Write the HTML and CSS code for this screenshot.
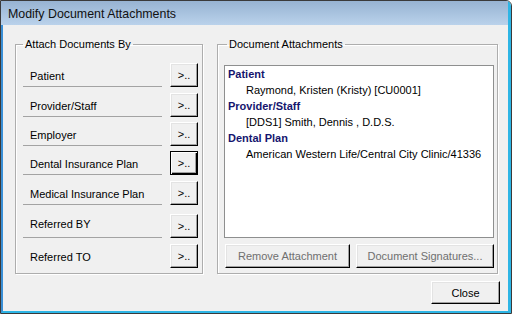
FILE: index.html
```html
<!DOCTYPE html>
<html>
    <head>
        <meta charset="utf-8">
        <title>Modify Document Attachments</title>
        <link rel="stylesheet" href="styles.css">
    </head>
    <body>
        <div class="window">
            <div class="titlebar">Modify Document Attachments</div>
            <div class="client">
                <div class="groups">
                    <fieldset class="group attach">
                        <legend>Attach Documents By</legend>
                        <div class="row"><span class="row-label">Patient</span><button class="btn pick">&gt;..</button></div>
                        <div class="row"><span class="row-label">Provider/Staff</span><button class="btn pick">&gt;..</button></div>
                        <div class="row"><span class="row-label">Employer</span><button class="btn pick">&gt;..</button></div>
                        <div class="row"><span class="row-label">Dental Insurance Plan</span><button class="btn pick focused">&gt;..</button></div>
                        <div class="row"><span class="row-label">Medical Insurance Plan</span><button class="btn pick">&gt;..</button></div>
                        <div class="row row-wide"><span class="row-label">Referred BY</span><button class="btn pick">&gt;..</button></div>
                        <div class="row"><span class="row-label">Referred TO</span><button class="btn pick">&gt;..</button></div>
                    </fieldset>
                    <fieldset class="group docs">
                        <legend>Document Attachments</legend>
                        <div class="listbox">
                            <div class="lb-head">Patient</div>
                            <div class="lb-item">Raymond, Kristen (Kristy) [CU0001]</div>
                            <div class="lb-head">Provider/Staff</div>
                            <div class="lb-item">[DDS1] Smith, Dennis , D.D.S.</div>
                            <div class="lb-head">Dental Plan</div>
                            <div class="lb-item">American Western Life/Central City Clinic/41336</div>
                        </div>
                        <div class="doc-actions">
                            <button class="btn remove" disabled>Remove Attachment</button>
                            <button class="btn signatures" disabled>Document Signatures...</button>
                        </div>
                    </fieldset>
                </div>
                <div class="footer">
                    <button class="btn close">Close</button>
                </div>
            </div>
        </div>
    </body>
</html>
```

FILE: styles.css
```css
html, body {
    margin: 0;
    padding: 0;
}
body {
    font-family: "Liberation Sans", Arial, sans-serif;
    font-size: 11px;
    color: #000;
    background: #fff;
}
.window {
    width: 512px;
    height: 314px;
    box-sizing: border-box;
    border: 1px solid #3a3a3a;
    border-top-right-radius: 6px;
    overflow: hidden;
}
.titlebar {
    height: 24px;
    box-sizing: border-box;
    padding: 2px 0 0 7px;
    line-height: 22px;
    font-size: 12.4px;
    color: #111;
    background: linear-gradient(#97b3d2, #bad2eb);
    border-right: 3px solid #2db5e5;
}
.client {
    height: 288px;
    box-sizing: border-box;
    padding-top: 13px;
    background: #f0f0f0;
    border-left: 2px solid #3a8fd6;
    border-right: 3px solid #2db5e5;
    border-bottom: 2px solid #2db5e5;
}
.groups {
    display: flex;
    gap: 14px;
    margin-left: 12px;
}
.group {
    margin: 0;
    min-width: 0;
    box-sizing: border-box;
    border: 1px solid #adadad;
    box-shadow: inset 1px 1px 0 #fff, 1px 1px 0 #fff;
}
.group legend {
    padding: 0 2px;
    line-height: 13px;
}
.attach {
    width: 188px;
    padding: 12px 4px 5px 7px;
}
.docs {
    width: 281px;
    padding: 14px 3px 5px 6px;
}
.docs legend {
    margin-left: 3px;
}
.row {
    display: flex;
    height: 24px;
    margin-top: 5px;
}
.row:first-of-type {
    margin-top: 0;
}
.row:nth-of-type(2), .row:nth-of-type(5), .row:nth-of-type(7) {
    margin-top: 6px;
}
.row-wide {
    margin-top: 9px;
}
.row-label {
    width: 139px;
    display: flex;
    align-items: flex-end;
    box-sizing: border-box;
    padding: 0 0 3px 7px;
    line-height: 13px;
    border-bottom: 1px solid #a3a3a3;
}
.row-wide .row-label {
    padding-bottom: 6px;
}
.row:last-of-type .row-label {
    border-bottom-color: transparent;
}
.btn {
    font-family: "Liberation Sans", Arial, sans-serif;
    font-size: 11px;
    color: #000;
    background: #f0f0f0;
    border: 1px solid;
    border-color: #fff #000 #000 #fff;
    box-shadow: inset -1px -1px 0 #a0a0a0, inset 1px 1px 0 #e3e3e3;
    padding: 0;
    margin: 0;
    box-sizing: border-box;
}
.btn:disabled {
    color: #6f6f6f;
}
.pick {
    width: 28px;
    height: 24px;
    margin-left: 8px;
}
.pick.focused {
    border-color: #000;
    box-shadow: inset 1px 1px 0 #fff, inset -1px -1px 0 #000, inset -2px -2px 0 #a0a0a0;
}
.listbox {
    height: 173px;
    box-sizing: border-box;
    background: #fff;
    border: 1px solid #8e8f8f;
    padding: 0 3px;
    line-height: 16px;
}
.lb-head {
    font-weight: bold;
    color: #15156e;
}
.lb-item {
    padding-left: 18px;
}
.doc-actions {
    display: flex;
    gap: 6px;
    margin: 6px 0 0 1px;
}
.remove, .signatures {
    height: 24px;
}
.remove {
    width: 125px;
}
.signatures {
    width: 138px;
}
.footer {
    display: flex;
    justify-content: flex-end;
    margin: 7px 8px 0 0;
}
.close {
    width: 69px;
    height: 23px;
}
```
